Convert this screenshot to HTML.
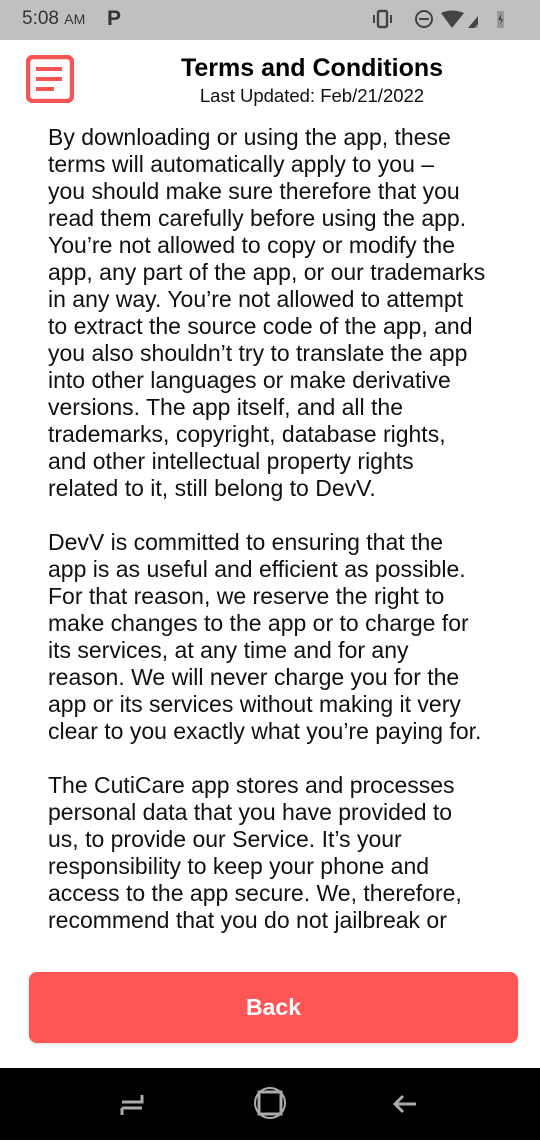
<!DOCTYPE html>
<html><head><meta charset="utf-8"><style>
*{margin:0;padding:0;box-sizing:border-box}
body{width:540px;height:1140px;background:#fff;font-family:"Liberation Sans",sans-serif;position:relative;overflow:hidden;color:#111}
.sb{position:absolute;left:0;top:0;width:540px;height:40px;background:#c0c0c0;color:#333}
.title{position:absolute;left:0;width:540px;text-align:center}
.txt{position:absolute;left:48px;top:124px;width:490px;height:813px;overflow:hidden;font-size:23px;line-height:27px;white-space:nowrap;color:#111}
.btn{position:absolute;left:29px;top:972px;width:489px;height:71px;background:#ff5555;border-radius:8px;color:#fff;font-weight:bold;font-size:23px;text-align:center;line-height:71px;box-shadow:0 1px 3px rgba(0,0,0,.15)}
.nav{position:absolute;left:0;top:1068px;width:540px;height:72px;background:#000}
</style></head><body>
<div class="sb">
<div style="position:absolute;left:22px;top:8px;font-size:19px;color:#333">5:08 <span style="font-size:14px">AM</span></div>
<div style="position:absolute;left:107px;top:7px;font-size:21px;font-weight:bold;color:#333">P</div>
<svg style="position:absolute;left:364px;top:8px" width="160" height="24" viewBox="0 0 160 24">
<rect x="14" y="3" width="9" height="16" rx="1.5" fill="none" stroke="#444" stroke-width="2.4"/>
<rect x="9" y="7" width="2" height="8" fill="#444"/><rect x="26" y="7" width="2" height="8" fill="#444"/>
<circle cx="60" cy="11" r="8" fill="none" stroke="#444" stroke-width="2"/><rect x="55" y="10" width="10" height="2" fill="#444"/>
<path d="M77 5 Q88 0 100 5 L88 20 Z" fill="#444"/>
<path d="M104 20 L114 8 L114 20 Z" fill="#444"/><path d="M110 20 L114 16 L114 20Z" fill="#999"/>
<rect x="133" y="3" width="7" height="17" fill="#999"/><path d="M137 6 L134 12 L137 12 L136 17 L139 11 L137 11 Z" fill="#444"/>
</svg>
</div>
<svg style="position:absolute;left:26px;top:55px" width="48" height="48" viewBox="0 0 48 48">
<rect x="2" y="2" width="44" height="44" rx="5" fill="none" stroke="#f55555" stroke-width="4.5"/>
<rect x="10" y="12" width="26" height="4" fill="#f55555"/>
<rect x="10" y="22" width="26" height="4" fill="#f55555"/>
<rect x="10" y="32" width="18" height="4" fill="#f55555"/>
</svg>
<div class="title" style="left:42px;top:54px;font-size:25px;font-weight:bold;color:#000">Terms and Conditions</div>
<div class="title" style="left:42px;top:85px;font-size:18.5px;color:#111">Last Updated: Feb/21/2022</div>
<div class="txt">By downloading or using the app, these<br>terms will automatically apply to you –<br>you should make sure therefore that you<br>read them carefully before using the app.<br>You’re not allowed to copy or modify the<br>app, any part of the app, or our trademarks<br>in any way. You’re not allowed to attempt<br>to extract the source code of the app, and<br>you also shouldn’t try to translate the app<br>into other languages or make derivative<br>versions. The app itself, and all the<br>trademarks, copyright, database rights,<br>and other intellectual property rights<br>related to it, still belong to DevV.<br><br>DevV is committed to ensuring that the<br>app is as useful and efficient as possible.<br>For that reason, we reserve the right to<br>make changes to the app or to charge for<br>its services, at any time and for any<br>reason. We will never charge you for the<br>app or its services without making it very<br>clear to you exactly what you’re paying for.<br><br>The CutiCare app stores and processes<br>personal data that you have provided to<br>us, to provide our Service. It’s your<br>responsibility to keep your phone and<br>access to the app secure. We, therefore,<br>recommend that you do not jailbreak or<br>root your phone, which is the process of</div>
<div class="btn">Back</div>
<div class="nav">
<svg width="540" height="72" viewBox="0 0 540 72">
<path d="M122 34 L142 34 L142 27 M122 40 L142 40 M122 40 L122 47" stroke="#aaa" stroke-width="3" fill="none"/>
<circle cx="270" cy="35" r="15" fill="none" stroke="#aaa" stroke-width="2"/>
<rect x="259" y="24" width="22" height="22" fill="none" stroke="#aaa" stroke-width="3"/>
<path d="M403 28 L395 36 L403 44 M395 36 L416 36" stroke="#aaa" stroke-width="3" fill="none"/>
</svg>
</div>
</body></html>
